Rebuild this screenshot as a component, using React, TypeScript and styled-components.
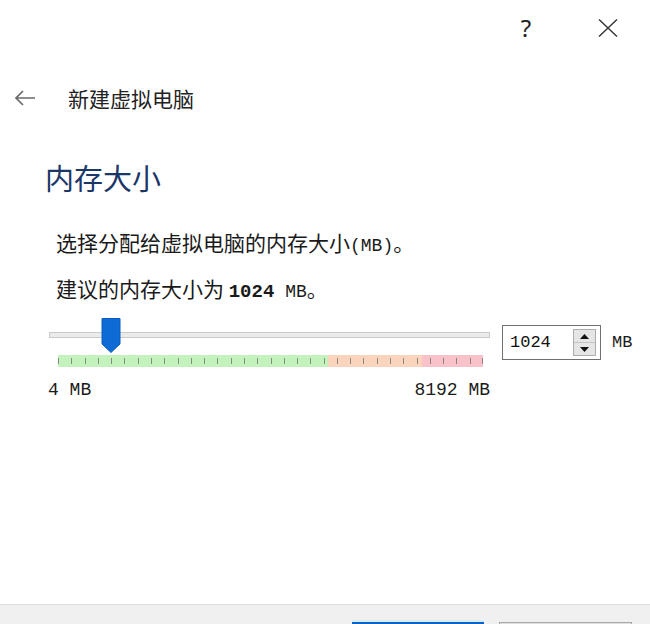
import React from "react";
import styled, { createGlobalStyle } from "styled-components";

const GlobalStyle = createGlobalStyle`
  html, body { margin: 0; padding: 0; background: #ffffff; }
  * { box-sizing: border-box; }
`;

const CJK = `"Noto Sans CJK SC", "Noto Sans", sans-serif`;
const MONO = `"Liberation Mono", "Noto Sans CJK SC", monospace`;

const Window = styled.div`
  width: 650px;
  height: 624px;
  background: #ffffff;
  display: flex;
  flex-direction: column;
  overflow: hidden;
  font-family: ${CJK};
  color: #1a1a1a;
`;

const TitleBar = styled.div`
  height: 56px;
  display: flex;
  justify-content: flex-end;
  align-items: center;
  padding-right: 24px;
  gap: 49px;
`;

const HelpButton = styled.div`
  width: 30px;
  text-align: center;
  font-family: "Noto Sans", sans-serif;
  font-size: 24px;
  line-height: 30px;
  color: #222;
`;

const CloseButton = styled.div`
  width: 36px;
  height: 30px;
  display: flex;
  align-items: center;
  justify-content: center;
`;

const Header = styled.div`
  margin-top: 22px;
  height: 40px;
  display: flex;
  align-items: center;
  padding-left: 14px;
  gap: 32px;
`;

const HeaderTitle = styled.div`
  font-size: 21px;
  line-height: 40px;
  color: #222;
`;

const Content = styled.div`
  padding-left: 45px;
  display: flex;
  flex-direction: column;
`;

const Heading = styled.h1`
  margin: 41px 0 0 0;
  font-size: 29px;
  line-height: 36px;
  font-weight: 400;
  color: #1b3768;
`;

const Paragraph = styled.p`
  margin: 0;
  padding-left: 11px;
  height: 46px;
  font-size: 21px;
  line-height: 46px;
  color: #1a1a1a;
`;

const FirstParagraph = styled(Paragraph)`
  margin-top: 24px;
`;

const Mono = styled.span<{ $bold?: boolean }>`
  font-family: ${MONO};
  font-size: ${(p) => (p.$bold ? "19px" : "18px")};
  font-weight: ${(p) => (p.$bold ? 700 : 400)};
  line-height: 1;
`;

const SliderRow = styled.div`
  margin-top: 14px;
  display: flex;
  align-items: flex-start;
`;

const SliderColumn = styled.div`
  margin-left: 4px;
  width: 441px;
  display: flex;
  flex-direction: column;
`;

const TrackArea = styled.div`
  position: relative;
  margin-top: 7px;
`;

const Track = styled.div`
  height: 6px;
  background: #ebebeb;
  border: 1px solid #cacaca;
`;

const Thumb = styled.svg`
  position: absolute;
  top: -14px;
  width: 20px;
  height: 35px;
`;

const TickBar = styled.div`
  margin: 17px 7px 0 9px;
  height: 12px;
  position: relative;
  display: flex;
`;

const Zone = styled.div<{ $color: string; $grow: number }>`
  flex: ${(p) => p.$grow} 0 0;
  background: ${(p) => p.$color};
`;

const Tick = styled.div`
  position: absolute;
  top: 3px;
  width: 1px;
  height: 6px;
  background: #6b6b6b;
  opacity: 0.75;
`;

const RangeLabels = styled.div`
  margin-top: 12px;
  display: flex;
  justify-content: space-between;
  font-family: ${MONO};
  font-size: 18px;
  line-height: 22px;
  color: #1a1a1a;
  margin-left: -1px;
`;

const SpinBox = styled.div`
  margin-left: 12px;
  width: 99px;
  height: 35px;
  border: 1px solid #707070;
  background: #ffffff;
  display: flex;
  align-items: center;
  padding-left: 7px;
  padding-right: 4px;
`;

const SpinValue = styled.div`
  flex: 1;
  font-family: ${MONO};
  font-size: 17px;
  color: #111;
`;

const SpinButtons = styled.div`
  width: 23px;
  height: 27px;
  border: 1px solid #adadad;
  display: flex;
  flex-direction: column;
  background: #e5e5e5;
`;

const SpinButton = styled.div<{ $down?: boolean }>`
  flex: 1;
  display: flex;
  align-items: center;
  justify-content: center;
  border-top: ${(p) => (p.$down ? "1px solid #c4c4c4" : "none")};
`;

const UnitLabel = styled.div`
  margin-left: 11px;
  font-family: ${MONO};
  font-size: 17px;
  line-height: 35px;
  color: #1a1a1a;
`;

const Footer = styled.div`
  margin-top: auto;
  height: 20px;
  border-top: 1px solid #dedede;
  background: #f0f0f0;
  display: flex;
  justify-content: flex-end;
  gap: 15px;
  padding-right: 18px;
`;

const FooterButton = styled.div<{ $primary?: boolean }>`
  margin-top: 17px;
  width: ${(p) => (p.$primary ? "132px" : "133px")};
  height: 30px;
  border: ${(p) => (p.$primary ? "2px solid #0a63c9" : "1px solid #a8a8a8")};
  background: ${(p) => (p.$primary ? "#e5f1fb" : "#e1e1e1")};
  box-shadow: ${(p) => (p.$primary ? "0 -2px 0 #d9ecfb" : "none")};
`;

const MIN = 4;
const MAX = 8192;
const VALUE = 1024;
const TICK_WIDTH = 425;

export default function App() {
  const ticks = Array.from({ length: 33 }, (_, i) => (i * TICK_WIDTH) / 32);
  const thumbCenter = 9 + ((VALUE - MIN) / (MAX - MIN)) * TICK_WIDTH;
  return (
    <>
      <GlobalStyle />
      <Window>
        <TitleBar>
          <HelpButton>?</HelpButton>
          <CloseButton>
            <svg width="20" height="18" viewBox="0 0 20 18">
              <path d="M1 0.5 L19 17.5 M19 0.5 L1 17.5" stroke="#333" strokeWidth="1.4" fill="none" />
            </svg>
          </CloseButton>
        </TitleBar>
        <Header>
          <svg width="22" height="16" viewBox="0 0 22 16">
            <path d="M21 8 H2 M9 1 L2 8 L9 15" stroke="#6a6a6a" strokeWidth="1.7" fill="none" />
          </svg>
          <HeaderTitle>新建虚拟电脑</HeaderTitle>
        </Header>
        <Content>
          <Heading>内存大小</Heading>
          <FirstParagraph>
            选择分配给虚拟电脑的内存大小<Mono>(MB)</Mono>。
          </FirstParagraph>
          <Paragraph>
            建议的内存大小为 <Mono $bold>1024</Mono>
            <Mono> MB</Mono>。
          </Paragraph>
          <SliderRow>
            <SliderColumn>
              <TrackArea>
                <Track />
                <Thumb viewBox="0 0 20 35" style={{ left: thumbCenter - 10 }}>
                  <path d="M1 0.5 H19 V26 L10 34.5 L1 26 Z" fill="#0e6bd6" stroke="#0a5cbd" strokeWidth="1" />
                </Thumb>
              </TrackArea>
              <TickBar>
                <Zone $color="#c4f2bd" $grow={270} />
                <Zone $color="#fbd4bd" $grow={94} />
                <Zone $color="#f9c2ca" $grow={61} />
                {ticks.map((x, i) => (
                  <Tick key={i} style={{ left: Math.min(x, TICK_WIDTH - 1) }} />
                ))}
              </TickBar>
              <RangeLabels>
                <span>4 MB</span>
                <span>8192 MB</span>
              </RangeLabels>
            </SliderColumn>
            <SpinBox>
              <SpinValue>1024</SpinValue>
              <SpinButtons>
                <SpinButton>
                  <svg width="9" height="5" viewBox="0 0 9 5">
                    <path d="M0 5 L4.5 0 L9 5 Z" fill="#111" />
                  </svg>
                </SpinButton>
                <SpinButton $down>
                  <svg width="9" height="5" viewBox="0 0 9 5">
                    <path d="M0 0 L4.5 5 L9 0 Z" fill="#111" />
                  </svg>
                </SpinButton>
              </SpinButtons>
            </SpinBox>
            <UnitLabel>MB</UnitLabel>
          </SliderRow>
        </Content>
        <Footer>
          <FooterButton $primary />
          <FooterButton />
        </Footer>
      </Window>
    </>
  );
}
